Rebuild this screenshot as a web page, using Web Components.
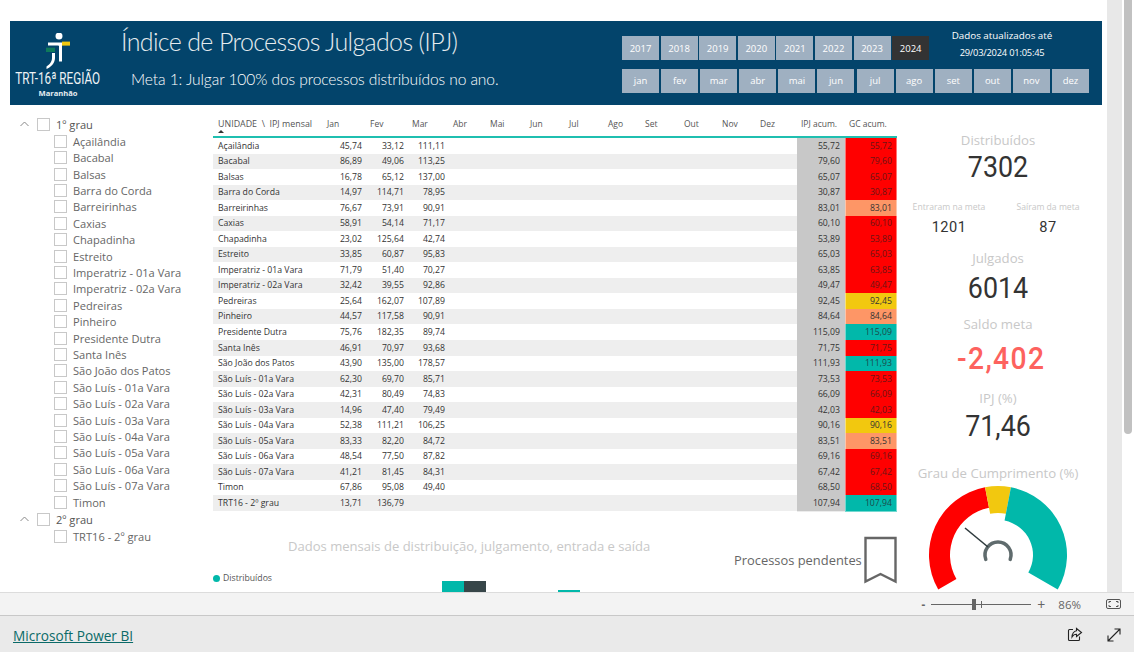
<!DOCTYPE html>
<html lang="pt">
<head>
<meta charset="utf-8">
<title>IPJ</title>
<style>
  html, body { margin: 0; height: 100%; overflow: hidden; background: #fff; }
  body { font-family: "Open Sans", "Noto Sans", sans-serif; }
</style>
</head>
<body>
<report-app></report-app>

<script>
  // Small helper: every element sets its own shadow markup
  function shadow(el, html) {
    el.attachShadow({mode: 'open'}).innerHTML = html;
  }

  const UNITS = [
    ['Açailândia', '45,74', '33,12', '111,11', '55,72', 'red'],
    ['Bacabal', '86,89', '49,06', '113,25', '79,60', 'red'],
    ['Balsas', '16,78', '65,12', '137,00', '65,07', 'red'],
    ['Barra do Corda', '14,97', '114,71', '78,95', '30,87', 'red'],
    ['Barreirinhas', '76,67', '73,91', '90,91', '83,01', 'orange'],
    ['Caxias', '58,91', '54,14', '71,17', '60,10', 'red'],
    ['Chapadinha', '23,02', '125,64', '42,74', '53,89', 'red'],
    ['Estreito', '33,85', '60,87', '95,83', '65,03', 'red'],
    ['Imperatriz - 01a Vara', '71,79', '51,40', '70,27', '63,85', 'red'],
    ['Imperatriz - 02a Vara', '32,42', '39,55', '92,86', '49,47', 'red'],
    ['Pedreiras', '25,64', '162,07', '107,89', '92,45', 'yellow'],
    ['Pinheiro', '44,57', '117,58', '90,91', '84,64', 'orange'],
    ['Presidente Dutra', '75,76', '182,35', '89,74', '115,09', 'teal'],
    ['Santa Inês', '46,91', '70,97', '93,68', '71,75', 'red'],
    ['São João dos Patos', '43,90', '135,00', '178,57', '111,93', 'teal'],
    ['São Luís - 01a Vara', '62,30', '69,70', '85,71', '73,53', 'red'],
    ['São Luís - 02a Vara', '42,31', '80,49', '74,83', '66,09', 'red'],
    ['São Luís - 03a Vara', '14,96', '47,40', '79,49', '42,03', 'red'],
    ['São Luís - 04a Vara', '52,38', '111,21', '106,25', '90,16', 'yellow'],
    ['São Luís - 05a Vara', '83,33', '82,20', '84,72', '83,51', 'orange'],
    ['São Luís - 06a Vara', '48,54', '77,50', '87,82', '69,16', 'red'],
    ['São Luís - 07a Vara', '41,21', '81,45', '84,31', '67,42', 'red'],
    ['Timon', '67,86', '95,08', '49,40', '68,50', 'red'],
    ['TRT16 - 2º grau', '13,71', '136,79', '', '107,94', 'teal']
  ];
  const MONTHS = ['Jan','Fev','Mar','Abr','Mai','Jun','Jul','Ago','Set','Out','Nov','Dez'];
  const COLS = '111px 41px 42px 41px 37px 40px 39px 39px 37px 39px 38px 38px 42px 48px 52px';

  class SlicerButton extends HTMLElement {
    constructor() {
      super();
      shadow(this, `<style>
        :host { display: flex; align-items: center; justify-content: center; height: 24px;
          background: #9fb0c1; color: #fff; font-size: 9.5px; box-sizing: border-box; }
        :host([active]) { background: #333; }
      </style><slot></slot>`);
    }
  }

  class ReportBanner extends HTMLElement {
    constructor() {
      super();
      const years = [2017,2018,2019,2020,2021,2022,2023,2024].map(y =>
        `<slicer-button ${y === 2024 ? 'active' : ''}>${y}</slicer-button>`).join('');
      const months = MONTHS.map(m => `<slicer-button>${m.toLowerCase()}</slicer-button>`).join('');
      shadow(this, `<style>
        :host { display: flex; position: relative; height: 84px; margin: 21px 5px 0 10px; background: #03446b; color: #fff; }
        .logo { width: 96px; flex: none; display: flex; flex-direction: column; align-items: center; }
        .logo svg { margin-top: 12px; display: block; }
        .org { font-family: "Roboto", sans-serif; font-size: 16.5px; line-height: 19px; white-space: nowrap; transform: scaleX(.71); color: #eef3f6; }
        .state { font-size: 7.6px; font-weight: 700; line-height: 10px; color: #e6edf1; }
        .titles { width: 501px; margin-left: 15px; flex: none; }
        h1 { margin: 2px 0 0; font-family: "Lato", sans-serif; font-size: 25px; line-height: 36px; font-weight: 300; letter-spacing: -.65px; color: #e6ecef; white-space: nowrap; }
        p { margin: 9px 0 0 10px; font-family: "Lato", sans-serif; font-size: 15.6px; line-height: 22px; font-weight: 300; letter-spacing: -.1px; color: #fff; white-space: nowrap; }
        .slicers { padding-top: 15px; width: 468px; flex: none; }
        .years { display: grid; grid-template-columns: repeat(8, 37px); column-gap: 1.6px; }
        .months { display: grid; grid-template-columns: repeat(12, 37px); column-gap: 2.1px; margin-top: 8.5px; }
        .stamp { position: absolute; left: 912px; top: 6px; width: 160px; text-align: center; font-size: 9.8px; line-height: 17px; }
        .stamp span { font-size: 9.3px; letter-spacing: -.2px; }
      </style>
      <div class="logo">
        <svg width="24" height="36" viewBox="0 0 24 36">
          <circle cx="13" cy="3" r="3.5" fill="#fff"/>
          <rect x="16" y="8.6" width="8" height="4" fill="#f2c80f"/>
          <rect x="0" y="14.7" width="9" height="4.3" fill="#0f7a5a"/>
          <path d="M2 9.5 H16 V28.5 H13 V13 Q13 12.5 12 12.5 H2 Z" fill="#fff"/>
          <path d="M6 20 H9 V25 C9 30 5 34 .5 36 V33.5 C3 32 6 29 6 25 Z" fill="#fff"/>
        </svg>
        <div class="org">TRT-16ª REGIÃO</div>
        <div class="state">Maranhão</div>
      </div>
      <div class="titles">
        <h1>Índice de Processos Julgados (IPJ)</h1>
        <p>Meta 1: Julgar 100% dos processos distribuídos no ano.</p>
      </div>
      <div class="slicers">
        <div class="years">${years}</div>
        <div class="months">${months}</div>
      </div>
      <div class="stamp">Dados atualizados até<br><span>29/03/2024 01:05:45</span></div>`);
    }
  }

  class UnitSlicer extends HTMLElement {
    constructor() {
      super();
      const item = name => `<div class="row child"><i></i><span>${name}</span></div>`;
      const first = UNITS.slice(0, 23).map(u => item(u[0])).join('');
      const chevron = `<svg width="9" height="6" viewBox="0 0 9 6"><path d="M.5 5 L4.5 1 L8.5 5" fill="none" stroke="#888" stroke-width="1"/></svg>`;
      shadow(this, `<style>
        :host { display: block; width: 213px; flex: none; padding: 0 0 0 20px; box-sizing: border-box;
          font-size: 11.1px; color: #666; }
        .row { display: flex; align-items: center; height: 16.42px; white-space: nowrap; }
        .row svg { width: 9px; margin-right: 8px; }
        i { display: block; width: 11px; height: 11px; border: 1px solid #c8c8c8; flex: none; margin-right: 6px; }
        .child { padding-left: 34px; }
        .row.top { height: 18px; }
        .row.top span { color: #555; }
      </style>
      <div class="row top">${chevron}<i></i><span>1º grau</span></div>
      ${first}
      <div class="row top">${chevron}<i></i><span>2º grau</span></div>
      ${item('TRT16 - 2º grau')}`);
    }
  }

  class IpjTable extends HTMLElement {
    constructor() {
      super();
      const blanks = n => Array(n).fill('<div class="c"></div>').join('');
      // rows are 15.54px in the report, snapped so that every line stays visible
      const rows = UNITS.map((u, i) => {
        const h = Math.round((i + 1) * 15.54) - Math.round(i * 15.54);
        return `<div class="row ${i % 2 ? 'alt' : ''}" style="height:${h}px;line-height:${h}px">
        <div class="c n">${u[0]}</div>
        <div class="c">${u[1]}</div><div class="c">${u[2]}</div><div class="c">${u[3]}</div>
        ${blanks(9)}
        <div class="c acc">${u[4]}</div><div class="c gc ${u[5]}">${u[4]}</div>
      </div>`;
      }).join('');
      const head = MONTHS.map(m => `<div class="h">${m}</div>`).join('');
      shadow(this, `<style>
        :host { display: block; width: 684px; font-size: 8.7px; color: #333; }
        .row, .head { display: grid; grid-template-columns: ${COLS}; }
        .head { height: 21px; border-bottom: 2px solid #1fbfb0; position: relative; }
        .h { padding: 3px 0 0 5px; color: #555; white-space: nowrap; font-size: 8.5px; line-height: 12px; }
        .h.first { font-size: 8.9px; }
        .h.jan { padding-left: 3px; }
        .sort { position: absolute; left: 5px; top: 15px; width: 0; height: 0;
          border: 3px solid transparent; border-top: 0; border-bottom: 3.5px solid #333; }
        .row.alt { background: #eeeeee; }
        .c { text-align: right; padding-right: 3px; white-space: nowrap; box-sizing: border-box; min-width: 0; }
        .n { text-align: left; padding-left: 5px; }
        .acc { background: #c8c8c8; padding-right: 5px; border-bottom: 1px solid #ececec; }
        .gc { padding-right: 4px; border: 1px solid rgba(255,255,255,.45); border-width: 0 1px 1px 1px; }
        .red { background: #ff0000; color: #6b1515; }
        .orange { background: #fe9666; }
        .yellow { background: #f2c80f; }
        .teal { background: #01b8aa; color: #1d4a4a; }
      </style>
      <div class="head">
        <div class="h first">UNIDADE &nbsp;\\&nbsp; IPJ mensal</div>${head.replace('class="h"', 'class="h jan"')}
        <div class="h" style="padding-left:4px">IPJ acum.</div><div class="h" style="padding-left:4px">GC acum.</div>
        <span class="sort"></span>
      </div>
      ${rows}`);
    }
  }

  class KpiCard extends HTMLElement {
    constructor() {
      super();
      shadow(this, `<style>
        :host { display: block; text-align: center; }
        .l { font-size: 13.2px; line-height: 18px; color: #c8c8c8; white-space: nowrap; }
        .v { margin-top: var(--gap, 0); font-family: "Roboto", sans-serif; font-size: 29.5px; line-height: 36px; color: #333; white-space: nowrap; transform: scaleX(.91); }
        :host([small]) .l { font-size: 8.6px; line-height: 14px; }
        :host([small]) .v { font-size: 15.5px; line-height: 26px; letter-spacing: .5px; transform: scaleX(.94); }
        :host([alert]) .v { color: #fd625e; font-size: 31px; font-weight: 500; line-height: 38px; letter-spacing: 1.5px; padding-left: 7px; }
        :host([bare]) .v { display: none; }
      </style>
      <div class="l">${this.getAttribute('label')}</div>
      <div class="v"><slot></slot></div>`);
    }
  }

  class GaugeChart extends HTMLElement {
    constructor() {
      super();
      // angle measured clockwise from the top
      const pt = (r, a) => {
        const t = (a - 90) * Math.PI / 180;
        return (75 + r * Math.cos(t)).toFixed(2) + ' ' + (75 + r * Math.sin(t)).toFixed(2);
      };
      const seg = (r0, r1, a0, a1, fill) => {
        const big = a1 - a0 > 180 ? 1 : 0;
        return `<path fill="${fill}" d="M${pt(r1, a0)} A${r1} ${r1} 0 ${big} 1 ${pt(r1, a1)} L${pt(r0, a1)} A${r0} ${r0} 0 ${big} 0 ${pt(r0, a0)} Z"/>`;
      };
      shadow(this, `<style>
        :host { display: block; height: 107px; overflow: hidden; }
        svg { display: block; margin: 0 auto; }
      </style>
      <svg width="150" height="107" viewBox="0 5 150 107">
        ${seg(48, 69, -120, -10.8, '#ff0000')}
        ${seg(42, 69, -10.8, 10.8, '#f2c80f')}
        ${seg(35, 69, 10.8, 120, '#01b8aa')}
        <path d="M${pt(13, -110)} A13 13 0 1 1 ${pt(13, 110)}" fill="none" stroke="#5f6b6d" stroke-width="3.5" stroke-linecap="round"/>
        <line x1="65" y1="67" x2="42" y2="48" stroke="#2f3b3e" stroke-width="1.6"/>
      </svg>`);
    }
  }

  class KpiPanel extends HTMLElement {
    constructor() {
      super();
      shadow(this, `<style>
        :host { display: block; width: 186px; flex: none; margin-left: 8px; padding-top: 16px; box-sizing: border-box; }
        .two { display: grid; grid-template-columns: 88px 86px; column-gap: 12px; margin-top: 15px; }
        .j { margin-top: 9px; --gap: 3px; }
        .s { margin-top: 9px; --gap: 7px; }
        .i { margin-top: 11px; --gap: 1px; }
        .g { margin-top: 20px; }
        gauge-chart { margin-top: 3px; }
      </style>
      <kpi-card label="Distribuídos">7302</kpi-card>
      <div class="two">
        <kpi-card small label="Entraram na meta">1201</kpi-card>
        <kpi-card small label="Saíram da meta">87</kpi-card>
      </div>
      <kpi-card class="j" label="Julgados">6014</kpi-card>
      <kpi-card class="s" alert label="Saldo meta">-2,402</kpi-card>
      <kpi-card class="i" label="IPJ (%)">71,46</kpi-card>
      <kpi-card class="g" bare label="Grau de Cumprimento (%)"></kpi-card>
      <gauge-chart></gauge-chart>`);
    }
  }

  class MonthlyChart extends HTMLElement {
    constructor() {
      super();
      shadow(this, `<style>
        :host { display: block; position: relative; height: 81px; overflow: hidden; }
        .t { position: absolute; left: 75px; top: 26px; font-size: 13.05px; line-height: 18px; color: #c8c8c8; white-space: nowrap; }
        .leg { position: absolute; left: 0; top: 61px; display: flex; align-items: center; gap: 3px; font-size: 8.7px; color: #555; line-height: 12px; }
        .leg i { display: block; width: 7px; height: 7px; border-radius: 50%; background: #01b8aa; }
        .p { position: absolute; left: 521px; top: 39px; font-size: 12.9px; line-height: 20px; color: #666; white-space: nowrap; }
        svg { position: absolute; left: 650px; top: 25px; }
        b { position: absolute; display: block; bottom: 0; }
      </style>
      <div class="t">Dados mensais de distribuição, julgamento, entrada e saída</div>
      <div class="p">Processos pendentes</div>
      <svg width="34" height="48" viewBox="0 0 34 48"><path d="M2.5 2 H32.5 V45.5 L17.5 38 L2.5 45.5 Z" fill="none" stroke="#666" stroke-width="2.4"/></svg>
      <div class="leg"><i></i>Distribuídos</div>
      <b style="left:229px;width:22px;height:11px;background:#01b8aa"></b>
      <b style="left:251px;width:22px;height:11px;background:#374649"></b>
      <b style="left:345px;width:22px;height:2px;background:#01b8aa"></b>`);
    }
  }

  class ZoomBar extends HTMLElement {
    constructor() {
      super();
      shadow(this, `<style>
        :host { display: flex; align-items: center; justify-content: flex-end; height: 23px; box-sizing: border-box;
          background: #f3f3f3; border-top: 1px solid #dcdcdc; font-size: 11.5px; color: #666; flex: none; }
        .minus { font-weight: 700; }
        .track { position: relative; width: 100px; height: 1px; background: #666; margin: 0 6px; }
        .thumb { position: absolute; left: 41px; top: -5px; width: 4px; height: 11px; background: #666; }
        .tick { position: absolute; left: 50px; top: -3px; width: 1px; height: 7px; background: #666; }
        .pct { margin: 0 0 0 13px; }
        svg { display: block; margin: 0 13px 0 25px; }
      </style>
      <span class="minus">-</span>
      <div class="track"><span class="tick"></span><span class="thumb"></span></div>
      <span style="font-size:14px">+</span>
      <span class="pct">86%</span>
      <svg width="15" height="10" viewBox="0 0 15 10" fill="none" stroke="#555"><rect x=".5" y=".5" width="14" height="9" rx="1.5"/><path d="M3 4 V2.5 H5 M10 2.5 H12 V4 M3 6 V7.5 H5 M10 7.5 H12 V6"/></svg>`);
    }
  }

  class FooterBar extends HTMLElement {
    constructor() {
      super();
      shadow(this, `<style>
        :host { display: flex; align-items: center; height: 37px; box-sizing: border-box; padding: 2px 13px 0;
          background: #eaeaea; border-top: 1px solid #c8c8c8; flex: none; }
        a { color: #0b6a68; font-size: 13.65px; text-decoration: underline; flex: 1; padding-top: 1px; }
        svg { display: block; }
      </style>
      <a href="#">Microsoft Power BI</a>
      <svg width="16" height="16" viewBox="0 0 16 16" fill="none" stroke="#222" stroke-width="1.1" style="margin-right:24px">
        <path d="M6 2.5 H2.5 Q1.5 2.5 1.5 3.5 V12.5 Q1.5 13.5 2.5 13.5 H11.5 Q12.5 13.5 12.5 12.5 V9.5"/>
        <path d="M9.5 1.5 L14.5 5.5 L9.5 9.5 V7.3 C7.5 7.3 6 8.2 5 10 C5 6.8 7 4 9.5 3.8 Z"/>
      </svg>
      <svg width="14" height="14" viewBox="0 0 14 14" fill="none" stroke="#222" stroke-width="1.1">
        <path d="M1 13 L13 1 M7.5 1 H13 V6.5 M1 7.5 V13 H6.5"/>
      </svg>`);
    }
  }

  class ReportApp extends HTMLElement {
    constructor() {
      super();
      shadow(this, `<style>
        :host { display: flex; flex-direction: column; height: 652px; width: 1134px; overflow: hidden; }
        .main { display: flex; height: 592px; flex: none; overflow: hidden; }
        .canvas { width: 1107px; flex: none; overflow: hidden; }
        .gutter { width: 15px; background: #e8e8e8; flex: none; }
        .scroll { width: 12px; flex: none; padding: 0 2px; box-sizing: border-box; }
        .scroll div { width: 8px; height: 434px; background: #c1c1c1; border-radius: 0 0 4px 4px; }
        .body { display: flex; margin-top: 10px; height: 477px; }
        .mid { width: 684px; flex: none; }
      </style>
      <div class="main">
        <div class="canvas">
          <report-banner></report-banner>
          <div class="body">
            <unit-slicer></unit-slicer>
            <div class="mid">
              <ipj-table></ipj-table>
              <monthly-chart></monthly-chart>
            </div>
            <kpi-panel></kpi-panel>
          </div>
        </div>
        <div class="gutter"></div>
        <div class="scroll"><div></div></div>
      </div>
      <zoom-bar></zoom-bar>
      <footer-bar></footer-bar>`);
    }
  }

  customElements.define('slicer-button', SlicerButton);
  customElements.define('report-banner', ReportBanner);
  customElements.define('unit-slicer', UnitSlicer);
  customElements.define('ipj-table', IpjTable);
  customElements.define('kpi-card', KpiCard);
  customElements.define('gauge-chart', GaugeChart);
  customElements.define('kpi-panel', KpiPanel);
  customElements.define('monthly-chart', MonthlyChart);
  customElements.define('zoom-bar', ZoomBar);
  customElements.define('footer-bar', FooterBar);
  customElements.define('report-app', ReportApp);
</script>
</body>
</html>
